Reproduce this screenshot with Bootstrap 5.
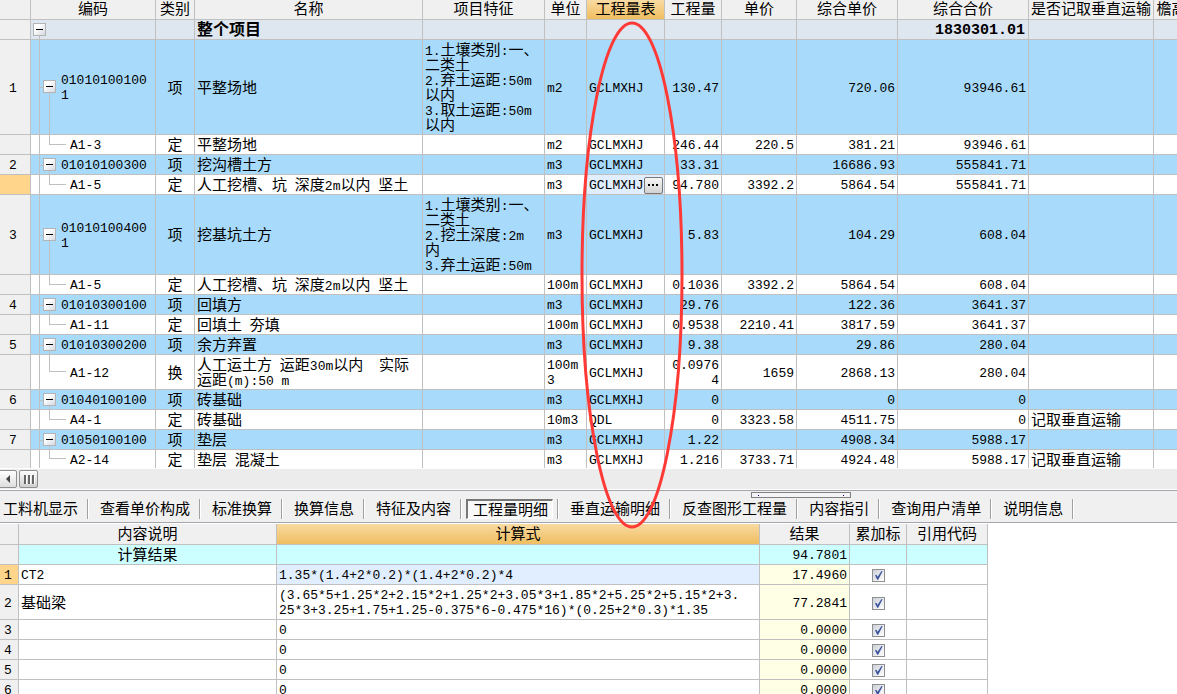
<!DOCTYPE html>
<html lang="zh-CN">
<head>
<meta charset="utf-8">
<meta name="viewport" content="width=device-width, initial-scale=1">
<title>工程量明细</title>
<link href="https://cdn.jsdelivr.net/npm/bootstrap@5.3.0/dist/css/bootstrap.min.css" rel="stylesheet">
<style>
  :root { --line: #c0c0c0; --face: #f0f0f0; }
  body { font: 15px/15px "Noto Sans CJK SC", sans-serif; color: #000; background: #fff; }
  button { font: inherit; color: inherit; }

  .sheet { table-layout: fixed; border-collapse: separate; border-spacing: 0; width: 0; }
  .sheet th, .sheet td { padding: 1px 2px 3px; border-right: 1px solid var(--line); border-bottom: 1px solid var(--line); vertical-align: middle; font-weight: 400; overflow: hidden; white-space: nowrap; }
  .sheet thead th { background: var(--face); text-align: center; padding: 0 0 4px; }
  .sheet thead .picked { background: linear-gradient(#f9daa2, #efbe60); }
  .sheet tbody th { background: var(--face); text-align: center; padding-right: 6px; }
  .sheet .marked { background: #ffd58c; }
  .sheet .num, .sheet tbody th, .lat { font-family: "Liberation Mono", monospace; font-size: 13px; }
  .sheet .num, .sheet tbody th { padding-top: 3px; padding-bottom: 1px; }
  .lat { line-height: 0; }
  .sheet .editing { background: #e0eeff; }

  .item td { background: #a8dbfb; }
  .total td { background: #dee6f0; }
  .total .title { font-size: 16px; font-weight: 700; }
  .sheet .total .sum { font-size: 15px; font-weight: 700; padding-right: 3px; }
  .sheet .last td, .sheet .last th { border-bottom: 0; padding-bottom: 2px; }
  .sheet .last .num, .sheet .last th { padding-bottom: 0; }

  /* tree connectors in the code column */
  .node { position: relative; }
  .sheet .item .node { padding-left: 30px; }
  .sheet .leaf .node { padding-left: 39px; }
  .total .node::after { content: ""; position: absolute; left: 8px; top: 50%; bottom: 0; border-left: 1px solid var(--line); }
  .item .node::before, .leaf .node::before { content: ""; position: absolute; left: 8px; top: 0; bottom: 0; border-left: 1px solid var(--line); }
  .item .node::after { content: ""; position: absolute; left: 8px; width: 11px; top: 50%; bottom: 0; border: solid var(--line); border-width: 1px 1px 0 0; }
  .leaf .node::after { content: ""; position: absolute; left: 18px; width: 17px; top: 0; bottom: 50%; border: solid var(--line); border-width: 0 0 1px 1px; }
  .fold { position: absolute; z-index: 1; left: 12px; top: calc(50% - 7px); width: 13px; height: 13px; padding: 0; border: 1px solid #b4b4b4; background: linear-gradient(135deg, #fff 30%, #d4d8e0); }
  .total .fold { left: 2px; }
  .fold::before { content: ""; display: block; width: 7px; height: 1px; margin: 0 auto; background: #000; }
  .more { position: absolute; right: 1px; top: 2px; width: 19px; height: 17px; padding: 0; border: 1px solid #777; border-radius: 2px; background: linear-gradient(#f6f6f6, #d2d2d2); }
  .more svg { display: block; margin: auto; }

  .hscroll { background: #ececec; padding: 1px 0 1px; border-top: 1px solid #fff; border-bottom: 1px solid #fff; height: 22px; }
  .hscroll button { width: 19px; padding: 0; border: 1px solid #8e8f8f; border-radius: 2px; background: linear-gradient(#fcfcfc, #cfcfcf); }
  .hscroll button:first-child { margin-left: -2px; margin-right: 2px; background: linear-gradient(#fff, #ddd); }
  .hscroll svg { display: block; margin: auto; }

  .tabstrip { position: relative; background: var(--face); border: solid #a5a5ad; border-width: 1px 0; padding: 8px 0 3px; }
  .tabstrip ul { margin: 0 0 0 -8px; }
  .tabstrip li { border-right: 1px solid #a0a0a0; box-shadow: 1px 0 #fff; padding: 0 4px; margin-right: 1px; }
  .tabstrip button { padding: 0 4px 3px 6px; border: 1px solid transparent; background: none; white-space: nowrap; display: block; height: 20px; }
  .tabstrip .active { background: #f8f8f8; border: solid #777; border-width: 2px 1px 1px 2px; border-right-color: #fff; border-bottom-color: #fff; padding: 0 4px 2px 5px; }
  .grip { position: absolute; left: 751px; top: 1px; width: 100px; height: 6px; border: 1px solid #808080; background: #f4f4f8; }
  .grip::before, .grip::after { content: ""; position: absolute; top: 2px; width: 1px; height: 1px; background: #008; }
  .grip::before { left: 6px; }
  .grip::after { right: 6px; }

  .detail { margin-top: 1px; }
  .detail thead th { padding: 1px 0 4px; }
  .detail tbody th { padding-right: 4px; }
  .detail .result td { background: #cff; }
  .detail .value { background: #ffffe6; text-align: right; }
  .detail .tick { padding-top: 3px; padding-bottom: 1px; }
  .detail input { appearance: none; display: block; margin: 0 auto; width: 13px; height: 13px; border: 1px solid #8e8f8f; background: linear-gradient(135deg, #c8ccd4, #fff); }
  .detail input:checked { background: url("data:image/svg+xml,%3Csvg xmlns='http://www.w3.org/2000/svg' viewBox='0 0 11 11'%3E%3Cpath d='M2 5.2 3.3 4.7 4.6 6.7 8.5 1 9.6 1.3 5.2 9.8 4.2 9.8Z' fill='%233d559c'/%3E%3C/svg%3E"), linear-gradient(135deg, #ccd0d8, #fff); }

  .circle-note { position: absolute; left: 579px; top: 20px; pointer-events: none; z-index: 5; }
</style>
</head>
<body>
<div class="vh-100 overflow-hidden position-relative d-flex flex-column">
  <div class="overflow-hidden flex-shrink-0">
    <table class="sheet">
      <colgroup><col style="width:31px"><col style="width:125px"><col style="width:39px"><col style="width:228px"><col style="width:122px"><col style="width:42px"><col style="width:78px"><col style="width:57px"><col style="width:75px"><col style="width:101px"><col style="width:131px"><col style="width:125px"><col style="width:66px"></colgroup>
      <thead>
        <tr><th></th><th>编码</th><th>类别</th><th>名称</th><th>项目特征</th><th>单位</th><th class="picked">工程量表</th><th>工程量</th><th>单价</th><th>综合单价</th><th>综合合价</th><th>是否记取垂直运输</th><th>檐高类别</th></tr>
      </thead>
      <tbody>
        <tr class="total"><th></th><td class="node"><button class="fold" aria-label="折叠"></button></td><td></td><td class="title">整个项目</td><td></td><td></td><td></td><td></td><td></td><td></td><td class="num sum text-end">1830301.01</td><td></td><td></td></tr>
        <tr class="item"><th>1</th><td class="num node"><button class="fold" aria-label="折叠"></button>01010100100<br>1</td><td class="text-center">项</td><td>平整场地</td><td><span class="lat">1.</span>土壤类别<span class="lat">:</span>一、<br>二类土<br><span class="lat">2.</span>弃土运距<span class="lat">:50m</span><br>以内<br><span class="lat">3.</span>取土运距<span class="lat">:50m</span><br>以内</td><td class="num">m2</td><td class="num">GCLMXHJ</td><td class="num text-end">130.47</td><td></td><td class="num text-end">720.06</td><td class="num text-end">93946.61</td><td></td><td></td></tr>
        <tr class="leaf"><th></th><td class="num node">A1-3</td><td class="text-center">定</td><td>平整场地</td><td></td><td class="num">m2</td><td class="num">GCLMXHJ</td><td class="num text-end">246.44</td><td class="num text-end">220.5</td><td class="num text-end">381.21</td><td class="num text-end">93946.61</td><td></td><td></td></tr>
        <tr class="item"><th>2</th><td class="num node"><button class="fold" aria-label="折叠"></button>01010100300</td><td class="text-center">项</td><td>挖沟槽土方</td><td></td><td class="num">m3</td><td class="num">GCLMXHJ</td><td class="num text-end">33.31</td><td></td><td class="num text-end">16686.93</td><td class="num text-end">555841.71</td><td></td><td></td></tr>
        <tr class="leaf"><th class="marked"></th><td class="num node">A1-5</td><td class="text-center">定</td><td>人工挖槽、坑<span class="lat"> </span>深度<span class="lat">2m</span>以内<span class="lat"> </span>坚土</td><td></td><td class="num">m3</td><td class="num editing position-relative">GCLMXHJ<button class="more" aria-label="编辑工程量表"><svg width="13" height="3" viewBox="0 0 13 3"><path d="M1 0h2v2H1zM5 0h2v2H5zM9 0h2v2H9z"/></svg></button></td><td class="num text-end">94.780</td><td class="num text-end">3392.2</td><td class="num text-end">5864.54</td><td class="num text-end">555841.71</td><td></td><td></td></tr>
        <tr class="item"><th>3</th><td class="num node"><button class="fold" aria-label="折叠"></button>01010100400<br>1</td><td class="text-center">项</td><td>挖基坑土方</td><td><span class="lat">1.</span>土壤类别<span class="lat">:</span>一、<br>二类土<br><span class="lat">2.</span>挖土深度<span class="lat">:2m</span><br>内<br><span class="lat">3.</span>弃土运距<span class="lat">:50m</span></td><td class="num">m3</td><td class="num">GCLMXHJ</td><td class="num text-end">5.83</td><td></td><td class="num text-end">104.29</td><td class="num text-end">608.04</td><td></td><td></td></tr>
        <tr class="leaf"><th></th><td class="num node">A1-5</td><td class="text-center">定</td><td>人工挖槽、坑<span class="lat"> </span>深度<span class="lat">2m</span>以内<span class="lat"> </span>坚土</td><td></td><td class="num">100m</td><td class="num">GCLMXHJ</td><td class="num text-end">0.1036</td><td class="num text-end">3392.2</td><td class="num text-end">5864.54</td><td class="num text-end">608.04</td><td></td><td></td></tr>
        <tr class="item"><th>4</th><td class="num node"><button class="fold" aria-label="折叠"></button>01010300100</td><td class="text-center">项</td><td>回填方</td><td></td><td class="num">m3</td><td class="num">GCLMXHJ</td><td class="num text-end">29.76</td><td></td><td class="num text-end">122.36</td><td class="num text-end">3641.37</td><td></td><td></td></tr>
        <tr class="leaf"><th></th><td class="num node">A1-11</td><td class="text-center">定</td><td>回填土<span class="lat"> </span>夯填</td><td></td><td class="num">100m</td><td class="num">GCLMXHJ</td><td class="num text-end">0.9538</td><td class="num text-end">2210.41</td><td class="num text-end">3817.59</td><td class="num text-end">3641.37</td><td></td><td></td></tr>
        <tr class="item"><th>5</th><td class="num node"><button class="fold" aria-label="折叠"></button>01010300200</td><td class="text-center">项</td><td>余方弃置</td><td></td><td class="num">m3</td><td class="num">GCLMXHJ</td><td class="num text-end">9.38</td><td></td><td class="num text-end">29.86</td><td class="num text-end">280.04</td><td></td><td></td></tr>
        <tr class="leaf"><th></th><td class="num node">A1-12</td><td class="text-center">换</td><td>人工运土方<span class="lat"> </span>运距<span class="lat">30m</span>以内<span class="lat">&nbsp;&nbsp;</span>实际<br>运距<span class="lat">(m):50 m</span></td><td></td><td class="num">100m<br>3</td><td class="num">GCLMXHJ</td><td class="num text-end">0.0976<br>4</td><td class="num text-end">1659</td><td class="num text-end">2868.13</td><td class="num text-end">280.04</td><td></td><td></td></tr>
        <tr class="item"><th>6</th><td class="num node"><button class="fold" aria-label="折叠"></button>01040100100</td><td class="text-center">项</td><td>砖基础</td><td></td><td class="num">m3</td><td class="num">GCLMXHJ</td><td class="num text-end">0</td><td></td><td class="num text-end">0</td><td class="num text-end">0</td><td></td><td></td></tr>
        <tr class="leaf"><th></th><td class="num node">A4-1</td><td class="text-center">定</td><td>砖基础</td><td></td><td class="num">10m3</td><td class="num">QDL</td><td class="num text-end">0</td><td class="num text-end">3323.58</td><td class="num text-end">4511.75</td><td class="num text-end">0</td><td>记取垂直运输</td><td></td></tr>
        <tr class="item"><th>7</th><td class="num node"><button class="fold" aria-label="折叠"></button>01050100100</td><td class="text-center">项</td><td>垫层</td><td></td><td class="num">m3</td><td class="num">GCLMXHJ</td><td class="num text-end">1.22</td><td></td><td class="num text-end">4908.34</td><td class="num text-end">5988.17</td><td></td><td></td></tr>
        <tr class="leaf last"><th></th><td class="num node">A2-14</td><td class="text-center">定</td><td>垫层<span class="lat"> </span>混凝土</td><td></td><td class="num">m3</td><td class="num">GCLMXHJ</td><td class="num text-end">1.216</td><td class="num text-end">3733.71</td><td class="num text-end">4924.48</td><td class="num text-end">5988.17</td><td>记取垂直运输</td><td></td></tr>
      </tbody>
    </table>
  </div>

  <div class="hscroll d-flex flex-shrink-0">
    <button aria-label="向左滚动"><svg width="6" height="8" viewBox="0 0 6 8"><path d="M5 0v8L1 4z" fill="#444"/></svg></button>
    <button aria-label="滚动滑块"><svg width="12" height="9" viewBox="0 0 12 9"><path d="M1 0h2v9H1zM5 0h2v9H5zM9 0h2v9H9z" fill="#666"/><path d="M3 1h1v8H3zM7 1h1v8H7zM11 1h1v8h-1z" fill="#fff"/></svg></button>
  </div>

  <nav class="tabstrip flex-shrink-0">
    <div class="grip"></div>
    <ul class="list-unstyled d-flex">
      <li><button>工料机显示</button></li>
      <li><button>查看单价构成</button></li>
      <li><button>标准换算</button></li>
      <li><button>换算信息</button></li>
      <li><button>特征及内容</button></li>
      <li><button class="active">工程量明细</button></li>
      <li><button>垂直运输明细</button></li>
      <li><button>反查图形工程量</button></li>
      <li><button>内容指引</button></li>
      <li><button>查询用户清单</button></li>
      <li><button>说明信息</button></li>
    </ul>
  </nav>

  <div class="overflow-hidden flex-fill">
    <table class="sheet detail">
      <colgroup><col style="width:19px"><col style="width:258px"><col style="width:483px"><col style="width:90px"><col style="width:57px"><col style="width:81px"></colgroup>
      <thead>
        <tr><th></th><th>内容说明</th><th class="picked">计算式</th><th>结果</th><th>累加标</th><th>引用代码</th></tr>
      </thead>
      <tbody>
        <tr class="result"><th></th><td class="text-center">计算结果</td><td></td><td class="num text-end">94.7801</td><td></td><td></td></tr>
        <tr><th class="marked">1</th><td class="num">CT2</td><td class="num editing">1.35*(1.4+2*0.2)*(1.4+2*0.2)*4</td><td class="num value">17.4960</td><td class="tick"><input type="checkbox" aria-label="累加标 1" checked></td><td></td></tr>
        <tr><th>2</th><td>基础梁</td><td class="num">(3.65*5+1.25*2+2.15*2+1.25*2+3.05*3+1.85*2+5.25*2+5.15*2+3.<br>25*3+3.25+1.75+1.25-0.375*6-0.475*16)*(0.25+2*0.3)*1.35</td><td class="num value">77.2841</td><td class="tick"><input type="checkbox" aria-label="累加标 2" checked></td><td></td></tr>
        <tr><th>3</th><td></td><td class="num">0</td><td class="num value">0.0000</td><td class="tick"><input type="checkbox" aria-label="累加标 3" checked></td><td></td></tr>
        <tr><th>4</th><td></td><td class="num">0</td><td class="num value">0.0000</td><td class="tick"><input type="checkbox" aria-label="累加标 4" checked></td><td></td></tr>
        <tr><th>5</th><td></td><td class="num">0</td><td class="num value">0.0000</td><td class="tick"><input type="checkbox" aria-label="累加标 5" checked></td><td></td></tr>
        <tr><th>6</th><td></td><td class="num">0</td><td class="num value">0.0000</td><td class="tick"><input type="checkbox" aria-label="累加标 6" checked></td><td></td></tr>
      </tbody>
    </table>
  </div>

  <svg class="circle-note" width="106" height="510" viewBox="0 0 106 510" fill="none" stroke="#ff3a36" stroke-width="3"><ellipse cx="53" cy="255" rx="50" ry="252"/></svg>
</div>
<script src="https://cdn.jsdelivr.net/npm/bootstrap@5.3.0/dist/js/bootstrap.bundle.min.js"></script>
</body>
</html>
